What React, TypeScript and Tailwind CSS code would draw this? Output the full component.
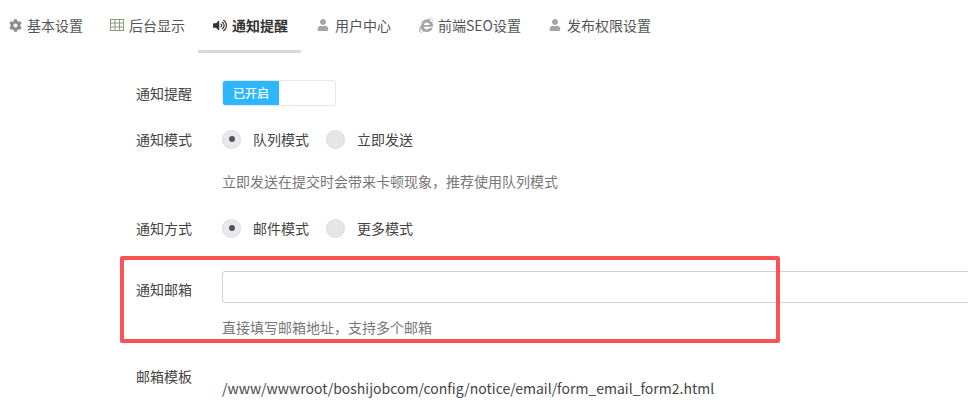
import { FaCog, FaInternetExplorer, FaUser, FaVolumeUp } from 'react-icons/fa';
import type { ReactNode } from 'react';

const FONT = "font-['Noto_Sans_CJK_SC','Noto_Sans',sans-serif]";

// outlined grid, the solid FaTable is too heavy for this one
function GridIcon() {
  return (
    <svg width="14" height="12" viewBox="0 0 14 12" fill="none" stroke="#8a9a7c" strokeWidth="1">
      <rect x="0.5" y="0.5" width="13" height="11" />
      <path d="M0.5 4H13.5M0.5 8H13.5M5 0.5V11.5M9.5 0.5V11.5" />
    </svg>
  );
}

function Tab({ icon, label, active, className }: { icon: ReactNode; label: string; active?: boolean; className?: string }) {
  return (
    <div
      className={`flex h-[53px] items-center border-b-[3px] pl-[15px] text-[14px] ${className ?? 'pr-[13px]'} ${
        active ? 'border-[#d7d8dc] font-bold text-[#333]' : 'border-transparent text-[#555]'
      }`}
    >
      <span className="mr-[5px] flex w-[14px] justify-center">{icon}</span>
      {label}
    </div>
  );
}

function Radio({ label, checked }: { label: string; checked?: boolean }) {
  return (
    <div className="flex w-[104px] items-center">
      <span
        className={`flex h-[19px] w-[19px] items-center justify-center rounded-full border border-[#dcdcdc] ${
          checked ? 'bg-[#e8e8f0]' : 'bg-[#e6e6e6]'
        }`}
      >
        {checked && <span className="h-[6px] w-[6px] rounded-full bg-[#555]" />}
      </span>
      <span className="ml-[12px] text-[14px] text-[#444]">{label}</span>
    </div>
  );
}

function Row({ label, className, labelClass, children }: { label: string; className: string; labelClass?: string; children: ReactNode }) {
  return (
    <div className={`flex items-center ${className}`}>
      <div className={`w-[86px] shrink-0 text-[14px] text-[#444] ${labelClass ?? ''}`}>{label}</div>
      {children}
    </div>
  );
}

export default function App() {
  return (
    <div className={`relative h-[407px] w-[968px] overflow-hidden bg-white ${FONT}`}>
      <div className="ml-[-7px] flex">
        <Tab icon={<FaCog size={13} color="#8d8d8d" />} label="基本设置" className="pr-[12px]" />
        <Tab icon={<GridIcon />} label="后台显示" />
        <Tab icon={<FaVolumeUp size={15} color="#333" />} label="通知提醒" active />
        <Tab icon={<FaUser size={12} color="#a5a5a5" />} label="用户中心" />
        <Tab icon={<FaInternetExplorer size={15} color="#a5a5a5" />} label="前端SEO设置" className="pr-[12px]" />
        <Tab icon={<FaUser size={12} color="#a5a5a5" />} label="发布权限设置" />
      </div>

      <div className="pl-[136px]">
        <Row label="通知提醒" className="mt-[27px] h-[26px]">
          <div className="flex h-[26px] w-[114px] rounded-[3px] border border-[#e4e6ee] bg-white">
            <div className="flex w-[56px] items-center justify-center rounded-l-[2px] bg-[#2db7ff] text-[12px] font-medium text-white">
              已开启
            </div>
          </div>
        </Row>
        <Row label="通知模式" className="mt-[20px] h-[26px]">
          <Radio label="队列模式" checked />
          <Radio label="立即发送" />
        </Row>
        <div className="mt-[19px] h-[20px] pl-[86px] text-[14px] leading-[20px] text-[#777]">
          立即发送在提交时会带来卡顿现象，推荐使用队列模式
        </div>
        <Row label="通知方式" className="mt-[24px] h-[26px]">
          <Radio label="邮件模式" checked />
          <Radio label="更多模式" />
        </Row>
        <Row label="通知邮箱" className="mt-[30px] h-[32px]" labelClass="pt-[4px]">
          <input className="h-[32px] w-[800px] shrink-0 rounded-[3px] border border-[#d2d2d2] bg-white outline-none" />
        </Row>
        <div className="mt-[14px] h-[20px] pl-[86px] text-[14px] leading-[20px] text-[#777]">
          直接填写邮箱地址，支持多个邮箱
        </div>
        <div className="mt-[29px] flex">
          <div className="w-[86px] shrink-0 text-[14px] leading-[20px] text-[#444]">邮箱模板</div>
          <div className="mt-[12px] text-[14px] leading-[20px] text-[#444]">
            /www/wwwroot/boshijobcom/config/notice/email/form_email_form2.html
          </div>
        </div>
      </div>

      {/* annotation drawn over the screenshot */}
      <div className="pointer-events-none absolute left-[120px] top-[256px] h-[87px] w-[660px] rounded-[2px] border-[4px] border-[#fb5252]" />
    </div>
  );
}
